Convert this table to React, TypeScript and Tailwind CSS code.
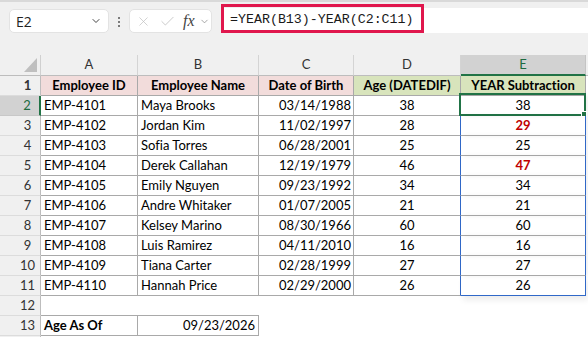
import { Check, ChevronDown, X } from "lucide-react";

type Employee = {
  id: string;
  name: string;
  dob: string;
  age: number;
  sub: number;
};

const employees: Employee[] = [
  { id: "EMP-4101", name: "Maya Brooks", dob: "03/14/1988", age: 38, sub: 38 },
  { id: "EMP-4102", name: "Jordan Kim", dob: "11/02/1997", age: 28, sub: 29 },
  { id: "EMP-4103", name: "Sofia Torres", dob: "06/28/2001", age: 25, sub: 25 },
  { id: "EMP-4104", name: "Derek Callahan", dob: "12/19/1979", age: 46, sub: 47 },
  { id: "EMP-4105", name: "Emily Nguyen", dob: "09/23/1992", age: 34, sub: 34 },
  { id: "EMP-4106", name: "Andre Whitaker", dob: "01/07/2005", age: 21, sub: 21 },
  { id: "EMP-4107", name: "Kelsey Marino", dob: "08/30/1966", age: 60, sub: 60 },
  { id: "EMP-4108", name: "Luis Ramirez", dob: "04/11/2010", age: 16, sub: 16 },
  { id: "EMP-4109", name: "Tiana Carter", dob: "02/28/1999", age: 27, sub: 27 },
  { id: "EMP-4110", name: "Hannah Price", dob: "02/29/2000", age: 26, sub: 26 },
];

const font = "font-['Lato','Liberation_Sans',sans-serif] text-[13px] [font-variant-ligatures:none]";

function RowHeader({ n, selected }: { n?: number; selected?: boolean }) {
  return (
    <div
      className={
        selected
          ? "w-[41px] h-full shrink-0 flex items-center justify-center pl-[15px] pt-[1px] bg-[#d2d2d2] text-[#1d6b40] border-b border-b-[#c8c8c8] border-r-2 border-r-[#217346]"
          : "w-[41px] h-full shrink-0 flex items-center justify-center pl-[15px] pt-[1px] bg-[#f0f0f0] text-[#333] border-b border-b-[#dcdcdc] border-r border-r-[#bdbdbd]"
      }
    >
      {n}
    </div>
  );
}

function Toolbar() {
  return (
    <div className="h-[40px] flex items-start bg-[#f0f0f0] border-t-2 border-[#d9d9d9]">
      <div className="ml-[9px] mt-[7px] w-[100px] h-[24px] bg-white rounded-[5px] border border-[#e3e3e3] flex items-center pl-[6px] pr-[6px] justify-between font-['Open_Sans',sans-serif] text-[14px] text-[#222]">
        <span>E2</span>
        <ChevronDown size={12} strokeWidth={2} className="text-[#444]" />
      </div>
      <div className="ml-[9px] mt-[15px] flex flex-col gap-[2px]">
        <div className="w-[2px] h-[2px] bg-[#555] rounded-full" />
        <div className="w-[2px] h-[2px] bg-[#555] rounded-full" />
        <div className="w-[2px] h-[2px] bg-[#555] rounded-full" />
      </div>
      <div className="ml-[9px] mt-[7px] w-[83px] h-[24px] bg-white rounded-[5px] border border-[#e3e3e3] flex items-center pl-[6px]">
        <X size={15} strokeWidth={1.1} className="text-[#bdbdbd]" />
        <Check size={17} strokeWidth={1.1} className="ml-[8px] text-[#bdbdbd]" />
        <span className="ml-[7px] font-['Liberation_Serif',serif] italic text-[16px] text-[#444] leading-none">
          fx
        </span>
        <ChevronDown size={11} strokeWidth={1.6} className="ml-[4px] text-[#888]" />
      </div>
      <div className="ml-[9px] mt-[6px] flex-1 h-[25px] bg-white flex items-center">
        <div className="-mt-[4px] h-[29px] w-[203px] border-[3px] border-[#e0174d] flex items-center pl-[6px] pt-[3px] font-['Liberation_Mono',monospace] text-[13.3px] text-[#1a1a1a]">
          =YEAR(B13)-YEAR(C2:C11)
        </div>
      </div>
    </div>
  );
}

function ColumnHeaders() {
  return (
    <div className="h-[21px] flex bg-[#f0f0f0] text-[#333]">
      <div className="w-[41px] h-full shrink-0 border-r border-r-[#d0d0d0] border-b border-b-[#bdbdbd] relative">
        <svg className="absolute left-[24px] top-[3px]" width="13" height="14" viewBox="0 0 13 14">
          <polygon points="13,0 13,14 0,14" fill="#bfbfbf" />
        </svg>
      </div>
      <div className="w-[97px] h-full shrink-0 flex items-center justify-center border-r border-r-[#d4d4d4] border-b border-b-[#bdbdbd]">A</div>
      <div className="w-[121px] h-full shrink-0 flex items-center justify-center border-r border-r-[#d4d4d4] border-b border-b-[#bdbdbd]">B</div>
      <div className="w-[95px] h-full shrink-0 flex items-center justify-center border-r border-r-[#d4d4d4] border-b border-b-[#bdbdbd]">C</div>
      <div className="w-[107px] h-full shrink-0 flex items-center justify-center border-r border-r-[#d4d4d4] border-b border-b-[#bdbdbd]">D</div>
      <div className="w-[125px] h-full shrink-0 flex items-center justify-center bg-[#d2d2d2] text-[#1d6b40] border-r border-r-[#c4c4c4] border-b-2 border-b-[#217346]">E</div>
      <div className="flex-1 h-full border-b border-b-[#bdbdbd]" />
    </div>
  );
}

function HeaderRow() {
  return (
    <div className="h-[20px] flex font-bold text-black">
      <RowHeader n={1} />
      <div className="w-[97px] h-full shrink-0 flex items-center justify-center bg-[#f2dcdb] border-r border-b border-[#a9a9a9]">Employee ID</div>
      <div className="w-[121px] h-full shrink-0 flex items-center justify-center bg-[#f2dcdb] border-r border-b border-[#a9a9a9]">Employee Name</div>
      <div className="w-[95px] h-full shrink-0 flex items-center justify-center bg-[#f2dcdb] border-r border-b border-[#a9a9a9]">Date of Birth</div>
      <div className="w-[107px] h-full shrink-0 flex items-center justify-center bg-[#d8e4bc] border-r border-b border-[#a9a9a9]">Age (DATEDIF)</div>
      <div className="w-[125px] h-full shrink-0 flex items-center justify-center bg-[#d8e4bc] border-r border-b border-[#a9a9a9]">YEAR Subtraction</div>
    </div>
  );
}

function DataRow({ e, n }: { e: Employee; n: number }) {
  const last = n === 11;
  const off = e.sub !== e.age;
  return (
    <div className="h-[20px] flex text-black">
      <RowHeader n={n} selected={n === 2} />
      <div className="w-[97px] h-full shrink-0 flex items-center pl-[3px] pt-[1px] border-r border-b border-[#a9a9a9]">{e.id}</div>
      <div className="w-[121px] h-full shrink-0 flex items-center pl-[3px] pt-[1px] border-r border-b border-[#a9a9a9]">{e.name}</div>
      <div className="w-[95px] h-full shrink-0 flex items-center justify-end pr-[2px] pt-[1px] border-r border-b border-[#a9a9a9]">{e.dob}</div>
      <div className="w-[107px] h-full shrink-0 flex items-center justify-center pt-[1px] border-b border-b-[#a9a9a9] border-r border-r-[#3068c8]">{e.age}</div>
      <div
        className={
          last
            ? "w-[125px] h-full shrink-0 flex items-center justify-center pt-[1px] border-r border-b border-[#3068c8] relative shadow-[2px_4px_6px_rgba(0,0,0,0.08)]"
            : "w-[125px] h-full shrink-0 flex items-center justify-center pt-[1px] border-b border-b-[#a9a9a9] border-r border-r-[#3068c8] relative shadow-[3px_0_5px_rgba(0,0,0,0.06)]"
        }
      >
        <span className={off ? "font-bold text-[#c00000]" : ""}>{e.sub}</span>
        {n === 2 && (
          <>
            <div className="absolute -left-[2px] -top-[3px] -right-[1px] -bottom-[1px] border-2 border-[#217346]" />
            <div className="absolute -right-[2px] -bottom-[2px] w-[6px] h-[6px] bg-[#217346] border border-white" />
          </>
        )}
      </div>
    </div>
  );
}

export default function App() {
  return (
    <div className={`w-[588px] h-[337px] overflow-hidden bg-white ${font}`}>
      <Toolbar />
      <div className="h-[15px] bg-[#f0f0f0]" />
      <ColumnHeaders />
      <HeaderRow />
      {employees.map((e, i) => (
        <DataRow key={e.id} e={e} n={i + 2} />
      ))}
      <div className="h-[20px] flex">
        <RowHeader n={12} />
        <div className="w-[97px] h-full shrink-0 border-b border-[#a9a9a9]" />
        <div className="w-[121px] h-full shrink-0 border-b border-[#a9a9a9]" />
      </div>
      <div className="h-[20px] flex text-black">
        <RowHeader n={13} />
        <div className="w-[97px] h-full shrink-0 flex items-center pl-[3px] pt-[1px] font-bold border-r border-b border-[#a9a9a9]">Age As Of</div>
        <div className="w-[121px] h-full shrink-0 flex items-center justify-end pr-[3px] pt-[1px] border-r border-b border-[#a9a9a9]">09/23/2026</div>
      </div>
      <div className="h-[20px] flex">
        <RowHeader />
      </div>
    </div>
  );
}
